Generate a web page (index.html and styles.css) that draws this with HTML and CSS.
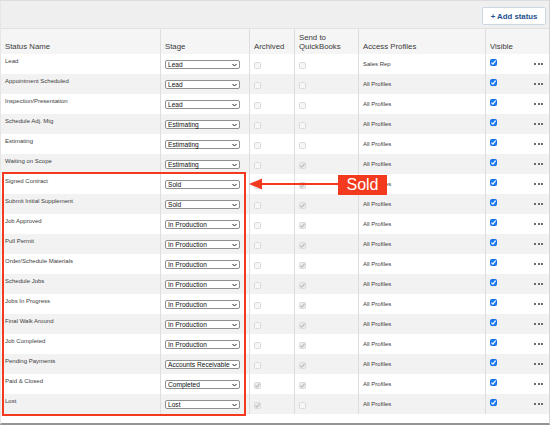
FILE: index.html
```html
<!DOCTYPE html>
<html lang="en">
<head>
    <meta charset="UTF-8">
    <meta name="viewport" content="width=device-width, initial-scale=1.0">
    <title>Job Statuses</title>
    <link rel="stylesheet" href="styles.css">
</head>
<body>
    <div class="page">
        <div class="toolbar">
            <button class="add-btn">+ Add status</button>
        </div>
        <div class="table">
            <div class="row head">
                <div class="cell">Status Name</div>
                <div class="cell">Stage</div>
                <div class="cell">Archived</div>
                <div class="cell">Send to<br>QuickBooks</div>
                <div class="cell">Access Profiles</div>
                <div class="cell">Visible</div>
            </div>
            <div id="rows"></div>
        </div>

        <!-- annotation drawn over the table -->
        <div class="callout-box"></div>
        <svg class="callout-arrow" width="92" height="12" viewBox="0 0 92 12">
            <line x1="11" y1="6" x2="92" y2="6" stroke="#f33a1f" stroke-width="2"/>
            <polygon points="0,6 13,0.5 13,11.5" fill="#f33a1f"/>
        </svg>
        <div class="callout-label">Sold</div>
    </div>

    <script>
        // status list shown in the table
        const statuses = [
            { name: 'Lead', stage: 'Lead', archived: false, qb: false, profiles: 'Sales Rep' },
            { name: 'Appointment Scheduled', stage: 'Lead', archived: false, qb: false, profiles: 'All Profiles' },
            { name: 'Inspection/Presentation', stage: 'Lead', archived: false, qb: false, profiles: 'All Profiles' },
            { name: 'Schedule Adj. Mtg', stage: 'Estimating', archived: false, qb: false, profiles: 'All Profiles' },
            { name: 'Estimating', stage: 'Estimating', archived: false, qb: false, profiles: 'All Profiles' },
            { name: 'Waiting on Scope', stage: 'Estimating', archived: false, qb: true, profiles: 'All Profiles' },
            { name: 'Signed Contract', stage: 'Sold', archived: false, qb: true, profiles: 'All Profiles' },
            { name: 'Submit Initial Supplement', stage: 'Sold', archived: false, qb: true, profiles: 'All Profiles' },
            { name: 'Job Approved', stage: 'In Production', archived: false, qb: true, profiles: 'All Profiles' },
            { name: 'Pull Permit', stage: 'In Production', archived: false, qb: true, profiles: 'All Profiles' },
            { name: 'Order/Schedule Materials', stage: 'In Production', archived: false, qb: true, profiles: 'All Profiles' },
            { name: 'Schedule Jobs', stage: 'In Production', archived: false, qb: true, profiles: 'All Profiles' },
            { name: 'Jobs In Progress', stage: 'In Production', archived: false, qb: true, profiles: 'All Profiles' },
            { name: 'Final Walk Around', stage: 'In Production', archived: false, qb: true, profiles: 'All Profiles' },
            { name: 'Job Completed', stage: 'In Production', archived: false, qb: true, profiles: 'All Profiles' },
            { name: 'Pending Payments', stage: 'Accounts Receivable', archived: false, qb: true, profiles: 'All Profiles' },
            { name: 'Paid & Closed', stage: 'Completed', archived: true, qb: true, profiles: 'All Profiles' },
            { name: 'Lost', stage: 'Lost', archived: true, qb: false, profiles: 'All Profiles' }
        ];

        const check = '<svg width="7" height="7" viewBox="0 0 7 7"><path d="M1.4 3.6 L2.9 5.1 L5.6 1.6" fill="none" stroke-width="1.2"/></svg>';
        const chevron = '<svg width="5" height="4" viewBox="0 0 5 4"><path d="M0.5 1 L2.5 3 L4.5 1" fill="none" stroke="#222" stroke-width="1"/></svg>';

        function checkbox(on, cls) {
            return `<span class="cb ${cls} ${on ? 'on' : ''}">${on ? check : ''}</span>`;
        }

        let html = '';
        statuses.forEach(function (s) {
            html += `
            <div class="row">
                <div class="cell name">${s.name.replace('&', '&amp;')}</div>
                <div class="cell stage"><div class="select"><span>${s.stage}</span>${chevron}</div></div>
                <div class="cell box">${checkbox(s.archived, 'disabled')}</div>
                <div class="cell box">${checkbox(s.qb, 'disabled')}</div>
                <div class="cell profiles">${s.profiles}</div>
                <div class="cell visible">${checkbox(true, 'blue')}<span class="more"><i></i><i></i><i></i></span></div>
            </div>`;
        });
        document.getElementById('rows').innerHTML = html;
    </script>
</body>
</html>
```

FILE: styles.css
```css
body {
    margin: 0;
    font-family: "Liberation Sans", Arial, sans-serif;
    color: #333;
    background-color: #fff;
}

.page {
    position: relative;
    width: 550px;
    height: 425px;
    box-sizing: border-box;
    border-top: 1px solid #dcdcdc;
    border-left: 1px solid #e6e6e6;
    border-right: 1px solid #d4d4d4;
    border-bottom: 2px solid #959595;
}

.toolbar {
    height: 28px;
    box-sizing: border-box;
    padding: 6px 3px 0 0;
    display: flex;
    justify-content: flex-end;
    align-items: flex-start;
    background-color: #efefef;
    border-bottom: 1px solid #e2e2e2;
}

.add-btn {
    width: 64px;
    height: 18px;
    padding: 0;
    font-family: inherit;
    font-size: 7.8px;
    font-weight: bold;
    color: #24508f;
    background-color: #fff;
    border: 1px solid #cdd6e3;
    border-radius: 2px;
}

.row {
    display: grid;
    grid-template-columns: 160px 89px 45px 64px 127px 1fr;
    height: 20px;
}

.row:nth-child(odd) {
    background-color: #fff;
}

.row:nth-child(even) {
    background-color: #f2f2f2;
}

.row.head {
    height: 25px;
    background-color: #f5f5f5;
}

.head .cell {
    display: flex;
    align-items: flex-end;
    padding-bottom: 3px;
    font-size: 7.8px;
    line-height: 8.5px;
    color: #3a3a3a;
}

.cell {
    box-sizing: border-box;
    padding-left: 4px;
    border-right: 1px solid #dedede;
    font-size: 6px;
    line-height: 8px;
    color: #3c3c3c;
}

.cell:last-child {
    border-right: none;
}

.name {
    padding-top: 3px;
}

.stage {
    padding-top: 6px;
}

.select {
    width: 75px;
    height: 9px;
    box-sizing: border-box;
    display: flex;
    justify-content: space-between;
    align-items: center;
    padding: 0 2px 0 2px;
    background-color: #fff;
    border: 1px solid #8f8f8f;
    border-radius: 2px;
    font-size: 6.6px;
    line-height: 7px;
    color: #111;
}

.box {
    padding-top: 8px;
}

.profiles {
    padding-top: 6px;
}

.visible {
    padding-top: 5px;
    padding-right: 6px;
    display: flex;
    justify-content: space-between;
    align-items: flex-start;
}

.cb {
    display: block;
    width: 7px;
    height: 7px;
    box-sizing: border-box;
    border-radius: 1.5px;
}

.cb svg {
    display: block;
    margin: -1px 0 0 -1px;
}

.cb.disabled {
    border: 1px solid #dadada;
    background-color: #f7f7f7;
}

.cb.disabled.on {
    background-color: #ececec;
}

.cb.disabled svg path {
    stroke: #bdbdbd;
}

.cb.blue {
    border: 1px solid #1570e8;
    background-color: #1a7cf5;
}

.cb.blue svg path {
    stroke: #fff;
}

.more {
    display: flex;
    gap: 1.5px;
    margin-top: 4px;
}

.more i {
    width: 2px;
    height: 2px;
    border-radius: 50%;
    background-color: #3c3c3c;
}

/* red annotation */
.callout-box {
    position: absolute;
    left: 1px;
    top: 171px;
    width: 244px;
    height: 244px;
    box-sizing: border-box;
    border: 2px solid #f33a1f;
}

.callout-arrow {
    position: absolute;
    left: 248px;
    top: 177px;
}

.callout-label {
    position: absolute;
    left: 337px;
    top: 174px;
    width: 49px;
    height: 20px;
    background-color: #f33a1f;
    color: #fff;
    font-size: 16px;
    line-height: 20px;
    text-align: center;
}
```
